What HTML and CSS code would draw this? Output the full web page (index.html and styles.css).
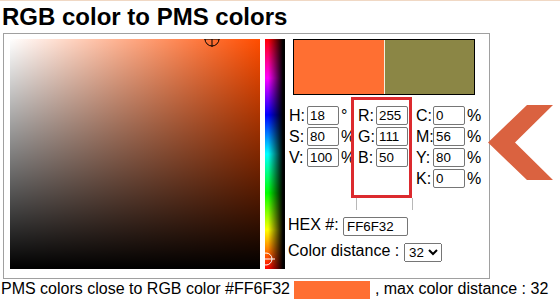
FILE: index.html
```html
<!DOCTYPE html>
<html lang="en">
<head>
    <meta charset="UTF-8">
    <meta name="viewport" content="width=device-width, initial-scale=1.0">
    <title>RGB color to PMS colors</title>
    <link rel="stylesheet" href="styles.css">
</head>
<body>
    <h1 class="title">RGB color to PMS colors</h1>

    <div class="converter">
        <div class="picker">
            <svg class="picker-cursor" width="20" height="20" viewBox="0 0 20 20">
                <circle cx="10" cy="10" r="7" fill="none" stroke="#000" stroke-width="1"/>
                <line x1="2" y1="10" x2="18" y2="10" stroke="#000" stroke-width="1"/>
                <line x1="10" y1="2" x2="10" y2="18" stroke="#000" stroke-width="1"/>
            </svg>
        </div>
        <div class="hue-bar">
            <svg class="hue-cursor" width="20" height="20" viewBox="0 0 20 20">
                <circle cx="10" cy="10" r="6" fill="none" stroke="#fff" stroke-width="1"/>
                <line x1="2" y1="10" x2="19" y2="10" stroke="#fff" stroke-width="1"/>
            </svg>
        </div>

        <div class="panel">
            <div class="swatches">
                <div class="swatch swatch-rgb"></div>
                <div class="swatch swatch-pms"></div>
            </div>

            <div class="fields">
                <div class="field-group hsv">
                    <label>H:</label><input type="text" value="18"><span class="unit">°</span>
                    <label>S:</label><input type="text" value="80"><span class="unit">%</span>
                    <label>V:</label><input type="text" value="100"><span class="unit">%</span>
                </div>
                <div class="field-group rgb">
                    <label>R:</label><input type="text" value="255">
                    <label>G:</label><input type="text" value="111">
                    <label>B:</label><input type="text" value="50">
                </div>
                <div class="field-group cmyk">
                    <label>C:</label><input type="text" value="0"><span class="unit">%</span>
                    <label>M:</label><input type="text" value="56"><span class="unit">%</span>
                    <label>Y:</label><input type="text" value="80"><span class="unit">%</span>
                    <label>K:</label><input type="text" value="0"><span class="unit">%</span>
                </div>
            </div>

            <div class="hex-row">
                <label>HEX #:</label>
                <input type="text" class="hex-input" value="FF6F32">
            </div>
            <div class="distance-row">
                <label>Color distance : </label>
                <select class="distance-select">
                    <option>32</option>
                </select>
            </div>
        </div>

        <!-- pointer arrow over the right edge -->
        <svg class="arrow" width="65" height="75" viewBox="0 0 65 75">
            <polygon points="65,0 39,0 0,37.5 39,75 65,75 27,37.5" fill="#da6240"/>
        </svg>
    </div>

    <p class="result">PMS colors close to RGB color #FF6F32 <span class="result-swatch"></span> , max color distance : 32</p>
</body>
</html>
```

FILE: styles.css
```css
html {
    box-sizing: border-box;
}

body {
    margin: 0;
    padding-left: 1px;
    border-top: 1px solid #f0d8c4;
    background: white;
    color: black;
    font-family: "Liberation Sans", Arial, sans-serif;
    font-size: 16px;
}

.title {
    margin: 0 0 0 1px;
    font-size: 24px;
    font-weight: bold;
    line-height: 32px;
}

.converter {
    position: relative;
    display: flex;
    align-items: flex-start;
    box-sizing: border-box;
    width: 487px;
    height: 246px;
    margin-left: 2px;
    padding: 5px 0 0 6px;
    border: 1px solid #a0a0a0;
}

.picker {
    position: relative;
    overflow: hidden;
    width: 250px;
    height: 230px;
    background:
        linear-gradient(to top, #000, rgba(0, 0, 0, 0)),
        linear-gradient(to right, #fff, rgba(255, 255, 255, 0)),
        rgb(255, 77, 0);
}

.picker-cursor {
    position: absolute;
    left: 192px;
    top: -10px;
}

.hue-bar {
    position: relative;
    overflow: hidden;
    width: 20px;
    height: 230px;
    margin-left: 5px;
    background:
        linear-gradient(to right, rgba(0, 0, 0, 0) 15%, #000 90%),
        linear-gradient(to bottom, #f00 0%, #f0f 17%, #00f 33%, #0ff 50%, #0f0 67%, #ff0 83%, #f00 100%);
}

.hue-cursor {
    position: absolute;
    left: -9px;
    top: 210px;
}

.panel {
    display: flex;
    flex-direction: column;
    margin-left: 3px;
}

.swatches {
    display: flex;
    box-sizing: border-box;
    width: 182px;
    height: 56px;
    margin-left: 5px;
    border: 1px solid #000;
}

.swatch {
    flex: 1;
}

.swatch-rgb {
    background: #ff6f32;
    border-right: 1px solid #f4f0e0;
}

.swatch-pms {
    background: #8b8645;
}

.fields {
    display: flex;
    align-items: flex-start;
    margin-top: 2px;
}

.field-group {
    display: grid;
    grid-auto-rows: 19px;
    row-gap: 2px;
    align-content: start;
    line-height: 19px;
}

.field-group input,
.hex-input {
    box-sizing: border-box;
    width: 32px;
    height: 19px;
    margin: 0;
    padding: 1px 2px;
    border: 1px solid #767676;
    border-radius: 2px;
    font-family: "Liberation Sans", Arial, sans-serif;
    font-size: 13.33px;
}

.unit {
    padding-left: 2px;
    white-space: nowrap;
}

.hsv {
    grid-template-columns: 18px 32px 12px;
    margin: 9px 0 0 1px;
}

.rgb {
    position: relative;
    grid-template-columns: 18px 32px;
    box-sizing: border-box;
    height: 101px;
    padding: 6px 1px 0 4px;
    border: 3px solid #dc2a2e;
    background: white;
}

.rgb::after {
    content: "";
    position: absolute;
    left: 2px;
    top: calc(100% + 3px);
    width: 55px;
    height: 12px;
    border-left: 1px solid #b8b8b8;
    border-right: 1px solid #b8b8b8;
}

.cmyk {
    grid-template-columns: 17px 32px 15px;
    margin-top: 9px;
    padding-left: 4px;
}

.hex-row,
.distance-row {
    display: flex;
    align-items: flex-start;
    line-height: 16px;
}

.hex-row {
    margin-top: 19px;
}

.hex-row label {
    width: 55px;
}

.hex-input {
    width: 65px;
    padding-left: 3px;
}

.distance-row {
    margin-top: 7px;
}

.distance-row label {
    width: 116px;
    white-space: pre;
}

.distance-select {
    box-sizing: border-box;
    width: 38px;
    height: 19px;
    margin: 0;
    font-family: "Liberation Sans", Arial, sans-serif;
    font-size: 13.33px;
}

.arrow {
    position: absolute;
    left: 484px;
    top: 71px;
}

.result {
    margin: 1px 0 0;
    line-height: 18px;
    white-space: nowrap;
}

.result-swatch {
    display: inline-block;
    width: 76px;
    height: 18px;
    vertical-align: -5px;
    background: #ff6f32;
}
```
